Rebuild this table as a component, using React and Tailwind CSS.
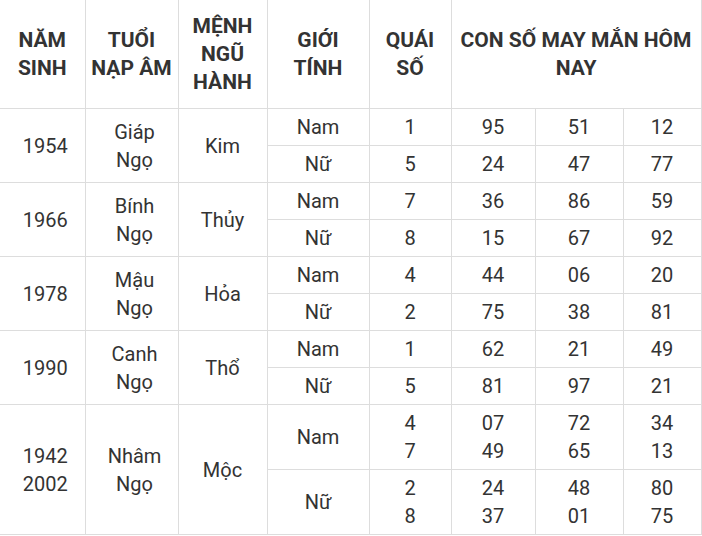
import React from 'react';

const groups = [
  {
    year: ['1954'], tuoi: ['Giáp', 'Ngọ'], menh: 'Kim',
    rows: [
      { gt: 'Nam', qs: ['1'], n: [['95'], ['51'], ['12']] },
      { gt: 'Nữ', qs: ['5'], n: [['24'], ['47'], ['77']] },
    ],
  },
  {
    year: ['1966'], tuoi: ['Bính', 'Ngọ'], menh: 'Thủy',
    rows: [
      { gt: 'Nam', qs: ['7'], n: [['36'], ['86'], ['59']] },
      { gt: 'Nữ', qs: ['8'], n: [['15'], ['67'], ['92']] },
    ],
  },
  {
    year: ['1978'], tuoi: ['Mậu', 'Ngọ'], menh: 'Hỏa',
    rows: [
      { gt: 'Nam', qs: ['4'], n: [['44'], ['06'], ['20']] },
      { gt: 'Nữ', qs: ['2'], n: [['75'], ['38'], ['81']] },
    ],
  },
  {
    year: ['1990'], tuoi: ['Canh', 'Ngọ'], menh: 'Thổ',
    rows: [
      { gt: 'Nam', qs: ['1'], n: [['62'], ['21'], ['49']] },
      { gt: 'Nữ', qs: ['5'], n: [['81'], ['97'], ['21']] },
    ],
  },
  {
    year: ['1942', '2002'], tuoi: ['Nhâm', 'Ngọ'], menh: 'Mộc',
    rows: [
      { gt: 'Nam', qs: ['4', '7'], n: [['07', '49'], ['72', '65'], ['34', '13']] },
      { gt: 'Nữ', qs: ['2', '8'], n: [['24', '37'], ['48', '01'], ['80', '75']] },
    ],
  },
];

const Lines = ({ items }) =>
  items.map((t, i) => (
    <React.Fragment key={i}>
      {i > 0 && <br />}
      {t}
    </React.Fragment>
  ));

// header + body cell styles
const th = 'border border-[#dddddd] border-t-0 px-1 py-3 text-[21px] font-bold text-center align-middle';
const td = 'border border-[#dddddd] px-1 py-1 text-center align-middle';
// first two body columns sit a touch right of centre
const tdShift = 'border border-[#dddddd] pl-[10px] pr-[4px] py-1 text-center align-middle';

export default function App() {
  return (
    <div className="w-[702px] h-[536px] overflow-hidden bg-white">
      <table
        className="border-collapse table-fixed w-[701px] text-[20px] leading-[28px] text-[#333333]"
        style={{ fontFamily: 'Roboto, "Noto Sans", sans-serif' }}
      >
        <colgroup>
          <col className="w-[85px]" />
          <col className="w-[93px]" />
          <col className="w-[89px]" />
          <col className="w-[102px]" />
          <col className="w-[82px]" />
          <col className="w-[84px]" />
          <col className="w-[88px]" />
          <col className="w-[78px]" />
        </colgroup>
        <thead>
          <tr>
            <th className={th + ' border-l-0'}>NĂM<br />SINH</th>
            <th className={th}>TUỔI<br />NẠP ÂM</th>
            <th className={th}>MỆNH<br />NGŨ<br />HÀNH</th>
            <th className={th}>GIỚI<br />TÍNH</th>
            <th className={th}>QUÁI<br />SỐ</th>
            <th className={th} colSpan={3}>CON SỐ MAY MẮN HÔM<br />NAY</th>
          </tr>
        </thead>
        <tbody>
          {groups.map((g) =>
            g.rows.map((r, ri) => (
              <tr key={g.year[0] + ri}>
                {ri === 0 && (
                  <>
                    <td className={tdShift + ' border-l-0'} rowSpan={2}><Lines items={g.year} /></td>
                    <td className={tdShift} rowSpan={2}><Lines items={g.tuoi} /></td>
                    <td className={td} rowSpan={2}>{g.menh}</td>
                  </>
                )}
                <td className={td}>{r.gt}</td>
                <td className={td}><Lines items={r.qs} /></td>
                {r.n.map((c, ci) => (
                  <td key={ci} className={td}><Lines items={c} /></td>
                ))}
              </tr>
            ))
          )}
        </tbody>
      </table>
    </div>
  );
}
